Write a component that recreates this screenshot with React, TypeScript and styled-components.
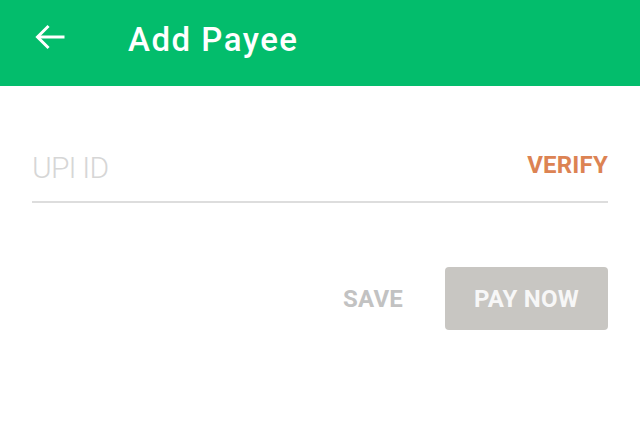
import * as React from "react";
import styled, { createGlobalStyle } from "styled-components";

const GlobalStyle = createGlobalStyle`
    html, body { margin: 0; padding: 0; background: #ffffff; }
    body { font-family: Roboto, "Noto Sans", sans-serif; }
`;

const Page = styled.div`
    width: 640px;
    height: 442px;
    background: #ffffff;
`;

const Toolbar = styled.header`
    height: 86px;
    background: #03bd6c;
    display: flex;
    align-items: center;
    padding: 0 0 0 35px;
    box-sizing: border-box;
`;

const BackButton = styled.button`
    width: 30px;
    height: 26px;
    padding: 0;
    border: none;
    background: transparent;
    display: flex;
    align-items: center;
    justify-content: center;
    margin-right: 63px;
    margin-top: -12px;
`;

const Title = styled.h1`
    margin: -8px 0 0 0;
    color: #ffffff;
    font-size: 33px;
    font-weight: 500;
    letter-spacing: 1.5px;
`;

const Form = styled.main`
    padding: 49px 32px 0;
`;

const FieldRow = styled.div`
    display: flex;
    align-items: center;
    justify-content: space-between;
    height: 60px;
    padding-bottom: 6px;
    border-bottom: 2px solid #dddddd;
`;

const Input = styled.input`
    flex: 1;
    border: none;
    outline: none;
    background: transparent;
    font-family: Roboto, sans-serif;
    font-weight: 300;
    font-size: 30px;
    letter-spacing: -0.8px;
    padding: 0;
    margin-top: 4px;
    color: #333;
    &::placeholder { color: #d6d6d6; }
`;

const TextAction = styled.button<{ tone: string }>`
    border: none;
    background: transparent;
    padding: 0;
    font-family: Roboto, sans-serif;
    font-weight: 700;
    font-size: 24px;
    letter-spacing: 0.2px;
    color: ${p => p.tone};
`;

const Actions = styled.div`
    display: flex;
    justify-content: flex-end;
    align-items: center;
    gap: 42px;
    margin-top: 64px;
`;

const PrimaryButton = styled.button`
    width: 163px;
    height: 63px;
    border: none;
    border-radius: 4px;
    background: #c8c6c2;
    color: #f7f7f7;
    font-family: Roboto, sans-serif;
    font-weight: 700;
    font-size: 24px;
    letter-spacing: 0.2px;
`;

const ArrowIcon = () => (
    <svg width="30" height="26" viewBox="0 0 30 26" fill="none" stroke="#ffffff" strokeWidth="3" strokeLinecap="square">
        <path d="M28 13H4" />
        <path d="M12.5 3L2.5 13l10 10" />
    </svg>
);

export default function App() {
    return (
        <Page>
            <GlobalStyle />
            <Toolbar>
                <BackButton aria-label="Back"><ArrowIcon /></BackButton>
                <Title>Add Payee</Title>
            </Toolbar>
            <Form>
                <FieldRow>
                    <Input placeholder="UPI ID" />
                    <TextAction tone="#dc8353">VERIFY</TextAction>
                </FieldRow>
                <Actions>
                    <TextAction tone="#c2c2c2">SAVE</TextAction>
                    <PrimaryButton>PAY NOW</PrimaryButton>
                </Actions>
            </Form>
        </Page>
    );
}
